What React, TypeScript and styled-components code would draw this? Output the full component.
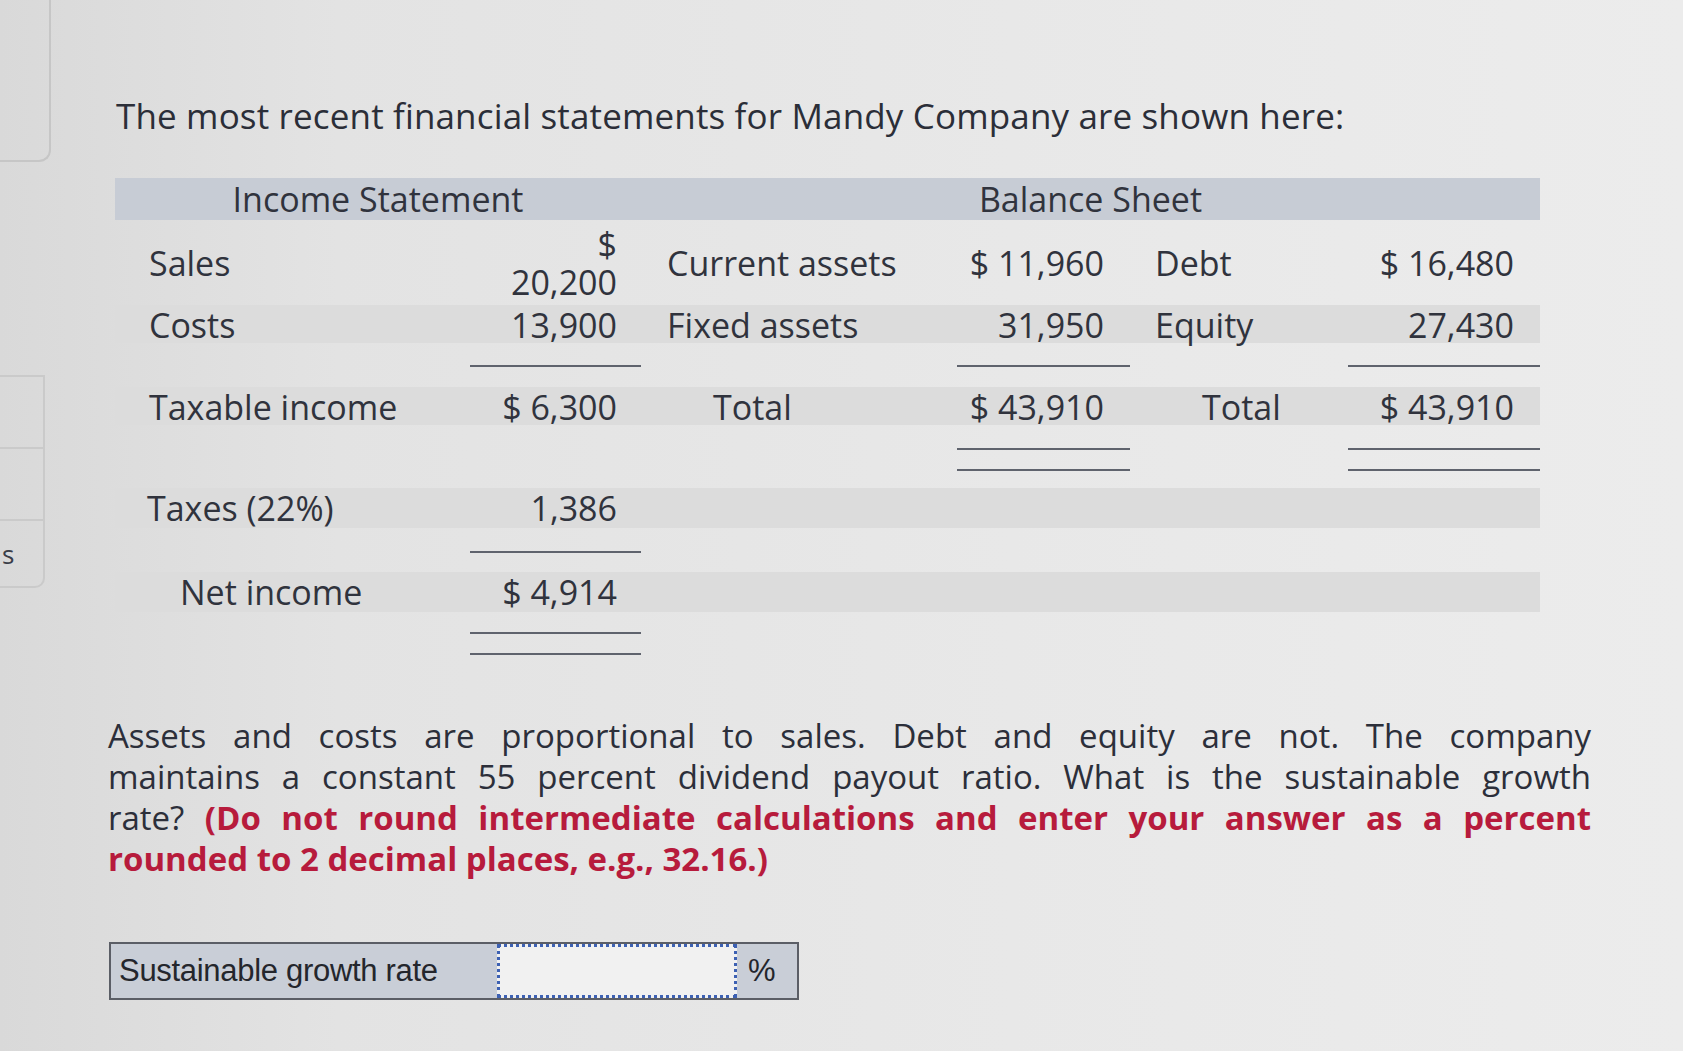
import React from "react";
import styled, { createGlobalStyle } from "styled-components";

const GlobalStyle = createGlobalStyle`
  html, body {
    margin: 0;
    padding: 0;
  }
  body {
    width: 1683px;
    height: 1051px;
    overflow: hidden;
    background: linear-gradient(90deg, #d9d9d9 0%, #e3e3e3 20%, #e8e8e8 60%, #ececec 100%);
    font-family: "Open Sans", "Liberation Sans", sans-serif;
    color: #2e313b;
  }
`;

const Page = styled.div`
  display: flex;
  height: 1051px;
`;

const LeftRail = styled.div`
  width: 51px;
  display: flex;
  flex-direction: column;
  flex-shrink: 0;
`;

const TopCard = styled.div`
  height: 160px;
  border-right: 2px solid #c6c6c6;
  border-bottom: 2px solid #c6c6c6;
  border-bottom-right-radius: 12px;
`;

const SideCard = styled.div`
  margin-top: 213px;
  width: 43px;
  display: flex;
  flex-direction: column;
  border-top: 2px solid #cacaca;
  border-right: 2px solid #cacaca;
  border-bottom: 2px solid #cacaca;
  border-bottom-right-radius: 10px;
`;

const SideSlot = styled.div<{ $h: number; $last?: boolean }>`
  height: ${(p) => p.$h}px;
  border-bottom: ${(p) => (p.$last ? "none" : "2px solid #cacaca")};
  display: flex;
  align-items: center;
  padding-left: 2px;
  font-size: 26px;
  color: #3a3d48;
`;

const Main = styled.div`
  margin-left: 57px;
  padding-top: 94px;
  display: flex;
  flex-direction: column;
`;

const Title = styled.div`
  margin-left: 8px;
  font-size: 35px;
  line-height: 44px;
  color: #2b2e38;
  letter-spacing: 0.15px;
`;

const Table = styled.div`
  margin-left: 7px;
  margin-top: 40px;
  width: 1425px;
  display: flex;
  flex-direction: column;
`;

const Row = styled.div<{ $h: number; $shade?: boolean; $top?: boolean }>`
  display: grid;
  grid-template-columns: 355px 171px 316px 173px 218px 192px;
  height: ${(p) => p.$h}px;
  align-items: ${(p) => (p.$top ? "start" : "center")};
  background: ${(p) => (p.$shade ? "#dcdcdc" : "transparent")};
  font-size: 34px;
  line-height: 40px;
  color: #30333d;
`;

const HeaderRow = styled(Row)`
  background: #c7ccd5;
  line-height: 42px;
`;

const HeadCell = styled.div<{ $span: number }>`
  grid-column: span ${(p) => p.$span};
  text-align: center;
`;

const Label = styled.div<{ $pad: number }>`
  padding-left: ${(p) => p.$pad}px;
  white-space: nowrap;
`;

const Value = styled.div<{ $pad?: number }>`
  text-align: right;
  padding-right: ${(p) => p.$pad ?? 26}px;
  white-space: nowrap;
`;

// narrow value cell: the amount wraps under its dollar sign
const WrapValue = styled.div`
  width: 112px;
  margin-left: auto;
  margin-right: 24px;
  text-align: right;
  line-height: 38px;
  white-space: normal;
`;

const Empty = styled.div``;

const Rule = styled.div<{ $double?: boolean; $offset?: number }>`
  margin-top: ${(p) => p.$offset ?? 0}px;
  height: ${(p) => (p.$double ? 19 : 0)}px;
  border-top: 2px solid #5f636d;
  border-bottom: ${(p) => (p.$double ? "2px solid #5f636d" : "none")};
`;

const Para = styled.div`
  margin-top: 43px;
  width: 1483px;
  font-size: 33px;
  line-height: 41px;
  color: #2c2f3a;
`;

const Line = styled.span<{ $last?: boolean }>`
  display: block;
  white-space: nowrap;
  text-align: ${(p) => (p.$last ? "left" : "justify")};
  text-align-last: ${(p) => (p.$last ? "left" : "justify")};
`;

const Hint = styled.span`
  color: #b71b3c;
  font-weight: 700;
`;

const InputBox = styled.div`
  margin-top: 63px;
  margin-left: 1px;
  width: 690px;
  height: 58px;
  box-sizing: border-box;
  display: flex;
  align-items: center;
  border: 2px solid #5b5e66;
  background: #c9ced7;
`;

const InputLabel = styled.div`
  width: 386px;
  padding-left: 8px;
  box-sizing: border-box;
  font-family: "Liberation Sans", Arial, sans-serif;
  font-size: 31px;
  letter-spacing: -0.3px;
  color: #24262c;
`;

const Field = styled.div`
  width: 240px;
  height: 54px;
  box-sizing: border-box;
  background: #f1f1f1;
  border: 3px dotted #3d61b3;
`;

const Unit = styled.div`
  padding-left: 11px;
  font-family: "Liberation Sans", Arial, sans-serif;
  font-size: 31px;
  color: #24262c;
`;

function App() {
  return (
    <Page>
      <GlobalStyle />
      <LeftRail>
        <TopCard />
        <SideCard>
          <SideSlot $h={70} />
          <SideSlot $h={70} />
          <SideSlot $h={65} $last>
            s
          </SideSlot>
        </SideCard>
      </LeftRail>
      <Main>
        <Title>The most recent financial statements for Mandy Company are shown here:</Title>
        <Table>
          <HeaderRow $h={42}>
            <HeadCell $span={2}>Income Statement</HeadCell>
            <HeadCell $span={4}>Balance Sheet</HeadCell>
          </HeaderRow>
          <Row $h={85}>
            <Label $pad={34}>Sales</Label>
            <WrapValue>$ 20,200</WrapValue>
            <Label $pad={26}>Current assets</Label>
            <Value>$ 11,960</Value>
            <Label $pad={25}>Debt</Label>
            <Value>$ 16,480</Value>
          </Row>
          <Row $h={38} $shade>
            <Label $pad={34}>Costs</Label>
            <Value $pad={24}>13,900</Value>
            <Label $pad={26}>Fixed assets</Label>
            <Value>31,950</Value>
            <Label $pad={25}>Equity</Label>
            <Value>27,430</Value>
          </Row>
          <Row $h={44} $top>
            <Empty />
            <Rule $offset={22} />
            <Empty />
            <Rule $offset={22} />
            <Empty />
            <Rule $offset={22} />
          </Row>
          <Row $h={38} $shade>
            <Label $pad={34}>Taxable income</Label>
            <Value $pad={24}>$ 6,300</Value>
            <Label $pad={72}>Total</Label>
            <Value>$ 43,910</Value>
            <Label $pad={72}>Total</Label>
            <Value>$ 43,910</Value>
          </Row>
          <Row $h={63} $top>
            <Empty />
            <Empty />
            <Empty />
            <Rule $double $offset={23} />
            <Empty />
            <Rule $double $offset={23} />
          </Row>
          <Row $h={40} $shade>
            <Label $pad={32}>Taxes (22%)</Label>
            <Value $pad={24}>1,386</Value>
          </Row>
          <Row $h={44} $top>
            <Empty />
            <Rule $offset={23} />
          </Row>
          <Row $h={40} $shade>
            <Label $pad={65}>Net income</Label>
            <Value $pad={24}>$ 4,914</Value>
          </Row>
          <Row $h={60} $top>
            <Empty />
            <Rule $double $offset={20} />
          </Row>
        </Table>
        <Para>
          <Line>Assets and costs are proportional to sales. Debt and equity are not. The company</Line>
          <Line>maintains a constant 55 percent dividend payout ratio. What is the sustainable growth</Line>
          <Line>
            rate? <Hint>(Do not round intermediate calculations and enter your answer as a percent</Hint>
          </Line>
          <Line $last>
            <Hint>rounded to 2 decimal places, e.g., 32.16.)</Hint>
          </Line>
        </Para>
        <InputBox>
          <InputLabel>Sustainable growth rate</InputLabel>
          <Field />
          <Unit>%</Unit>
        </InputBox>
      </Main>
    </Page>
  );
}

export default App;
